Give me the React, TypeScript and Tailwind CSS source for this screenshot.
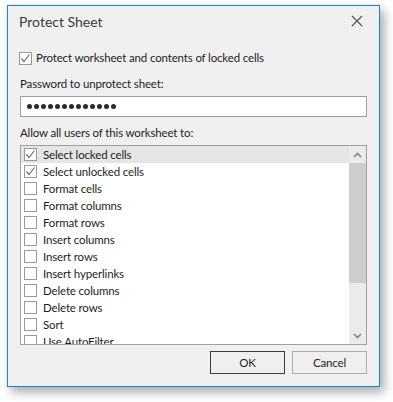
import React from 'react';

const items = [
  { label: 'Select locked cells', checked: true },
  { label: 'Select unlocked cells', checked: true },
  { label: 'Format cells', checked: false },
  { label: 'Format columns', checked: false },
  { label: 'Format rows', checked: false },
  { label: 'Insert columns', checked: false },
  { label: 'Insert rows', checked: false },
  { label: 'Insert hyperlinks', checked: false },
  { label: 'Delete columns', checked: false },
  { label: 'Delete rows', checked: false },
  { label: 'Sort', checked: false },
  { label: 'Use AutoFilter', checked: false },
];

const CheckBox = ({ checked }: { checked: boolean }) => (
  <div className="w-[13px] h-[13px] shrink-0 border border-[#9a9a9a] bg-white flex items-center justify-center">
    {checked && (
      <svg width="11" height="11" viewBox="0 0 11 11">
        <polyline points="1.5,5.5 4,8.5 9.5,1.5" fill="none" stroke="#707070" strokeWidth="1.2" />
      </svg>
    )}
  </div>
);

const Chevron = ({ up }: { up: boolean }) => (
  <svg width="9" height="6" viewBox="0 0 9 6">
    <polyline
      points={up ? '1,5 4.5,1.5 8,5' : '1,1 4.5,4.5 8,1'}
      fill="none"
      stroke="#858585"
      strokeWidth="1.6"
    />
  </svg>
);

export default function App() {
  return (
    <div className="w-[393px] h-[402px] bg-white pl-[7px] pt-[5px] text-[11.5px] tracking-[-0.15px] text-[#1e1e1e]" style={{ fontFamily: 'Lato, "Noto Sans", sans-serif' }}>
      <div className="w-[373px] h-[382px] border border-[#1883d7] bg-[#f0f0f0] flex flex-col px-3 shadow-[4px_5px_10px_rgba(0,0,0,0.35)]">
        <div className="h-[30px] flex items-center justify-between -ml-[1px]">
          <span className="text-[14px] tracking-normal text-[#3c3c3c]">Protect Sheet</span>
          <svg width="12" height="12" viewBox="0 0 12 12" className="mr-[4px]">
            <path d="M1 1 L11 11 M11 1 L1 11" stroke="#555" strokeWidth="1.2" />
          </svg>
        </div>

        <div className="mt-[14px] h-[16px] flex items-center gap-[4px] -ml-[1px]">
          <CheckBox checked />
          <span className="leading-none">Protect worksheet and contents of locked cells</span>
        </div>

        <div className="mt-[10px] h-[16px] flex items-center leading-none">Password to unprotect sheet:</div>

        <div className="mt-[4px] h-[21px] border border-[#a0a0a0] bg-white flex items-center px-[6px] gap-[2px]">
          {Array.from({ length: 13 }).map((_, i) => (
            <span key={i} className="w-[5px] h-[5px] rounded-full bg-[#2a2a2a]" />
          ))}
        </div>

        <div className="mt-[8px] h-[16px] flex items-center leading-none">Allow all users of this worksheet to:</div>

        <div className="mt-[4px] h-[200px] border border-[#a0a0a0] bg-white flex overflow-hidden">
          <div className="flex-1 flex flex-col">
            {items.map((it, i) => (
              <div key={it.label} className={`h-[17px] shrink-0 flex items-center gap-[6px] pl-[3px] ${i === 0 ? 'bg-[#e5e5e5]' : ''}`}>
                <CheckBox checked={it.checked} />
                <span className="leading-none">{it.label}</span>
              </div>
            ))}
          </div>
          <div className="w-[17px] bg-[#ebebeb] flex flex-col">
            <div className="h-[17px] flex items-center justify-center">
              <Chevron up />
            </div>
            <div className="h-[120px] bg-[#cdcdcd]" />
            <div className="flex-1" />
            <div className="h-[17px] flex items-center justify-center">
              <Chevron up={false} />
            </div>
          </div>
        </div>

        <div className="mt-[6px] flex justify-end gap-[7px]">
          <button className="w-[75px] h-[23px] border border-[#3c3c3c] bg-[#efefef]">OK</button>
          <button className="w-[75px] h-[23px] border border-[#adadad] bg-[#efefef]">Cancel</button>
        </div>
      </div>
    </div>
  );
}
